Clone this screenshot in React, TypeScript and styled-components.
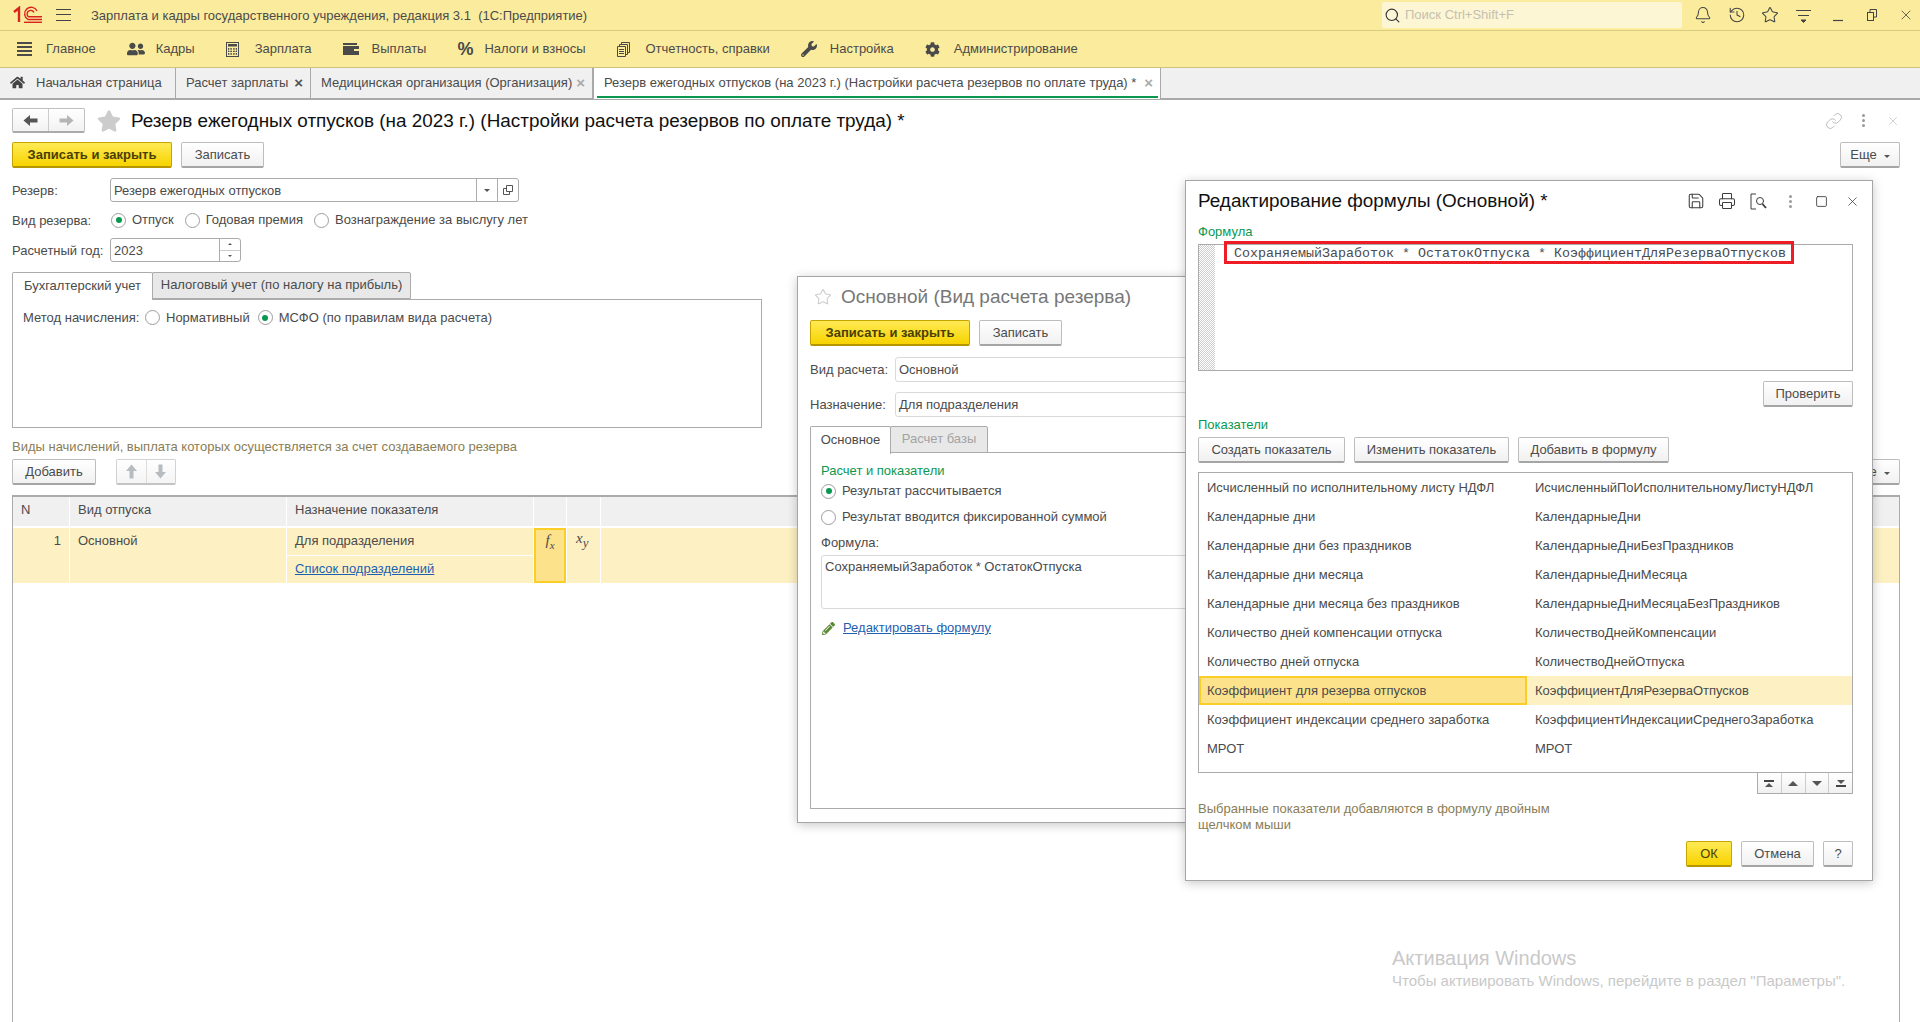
import React from 'react';
import styled, { createGlobalStyle } from 'styled-components';
import { Bell, History, Star, Search, Save, Printer, Square, X, Link as ChainIcon } from 'lucide-react';
import { FaHome, FaUserFriends, FaWrench, FaCog, FaStar, FaPencilAlt } from 'react-icons/fa';

const Global = createGlobalStyle`
  html, body { margin: 0; padding: 0; height: 100%; overflow: hidden; background: #fff; }
  body { font: 13px/16px "Liberation Sans", Arial, sans-serif; color: #4b4b4b; }
  * { box-sizing: border-box; }
`;

const Page = styled.div`
  position: relative; width: 1920px; height: 1022px; display: flex; flex-direction: column; overflow: hidden;
`;
const TitleBar = styled.header`
  height: 31px; flex: none; display: flex; align-items: center; background: #fbec9d;
  border-bottom: 1px solid #d8cb80; padding-left: 13px;
`;
const Logo = styled.svg`width: 30px; height: 18px; flex: none;`;
const Burger = styled.div`
  width: 15px; height: 12px; margin-left: 13px; flex: none;
  border-top: 1px solid #444; border-bottom: 1px solid #444; position: relative;
  &::after { content: ''; position: absolute; left: 0; right: 0; top: 4px; height: 1px; background: #444; }
`;
const AppName = styled.div`margin-left: 20px; padding-top: 1px; white-space: pre;`;
const SearchBox = styled.div`
  margin-left: auto; width: 300px; height: 26px; background: #fdf6d4; border-radius: 2px;
  display: flex; align-items: center; padding-left: 2px; color: #c4c0b0;
  & > svg { color: #333; margin-right: 4px; }
`;
const TopIcons = styled.div`
  display: flex; align-items: center; padding-left: 12px; color: #444; width: 238px; flex: none;
  & > * { flex: none; }
`;
const TopIcon = styled.span<{ $w: number }>`
  width: ${p => p.$w}px; display: flex; align-items: center;
`;
const MenuBar = styled.nav`
  height: 37px; flex: none; background: #fbec9d; border-bottom: 1px solid #cfc27c;
  display: flex; align-items: center; padding-left: 17px; gap: 31px;
`;
const MenuItem = styled.div`display: flex; align-items: center; white-space: nowrap;`;
const MenuIcon = styled.span<{ $w?: number }>`
  width: ${p => p.$w ?? 29}px; height: 18px; display: flex; align-items: center; flex: none; color: #4a4a4a;
`;
const Percent = styled.span`font-size: 18px; font-weight: bold; color: #4a4a4a; line-height: 18px;`;
const TabBar = styled.div`
  height: 32px; flex: none; background: #f0f0f0; border-bottom: 2px solid #a9a9a9; display: flex;
`;
const PageTab = styled.div<{ $w: number; $active?: boolean }>`
  width: ${p => p.$w}px; height: 31px; flex: none; position: relative; display: flex; align-items: center;
  padding: 0 7px 2px 10px; border-right: 1px solid #a9a9a9; white-space: nowrap;
  background: ${p => (p.$active ? '#fff' : 'transparent')};
  ${p => p.$active && `
    border-left: 1px solid #a9a9a9;
    &::after { content: ''; position: absolute; left: 3px; right: 2px; bottom: 1px; height: 2px; background: #0a9850; }
  `}
`;
const TabClose = styled.span<{ $muted?: boolean }>`
  margin-left: auto; font-size: 15px; font-weight: bold; color: ${p => (p.$muted ? '#aaa' : '#555')};
`;
const HomeIcon = styled.span`width: 26px; display: flex; color: #444; flex: none;`;

const Form = styled.main`
  flex: 1; min-height: 0; display: flex; flex-direction: column; padding: 8px 20px 0 12px;
`;
const HeadRow = styled.div`display: flex; align-items: center; height: 25px; flex: none;`;
const NavGroup = styled.div`
  width: 73px; height: 25px; flex: none; display: flex; border: 1px solid #c0c0c0; border-bottom: 2px solid #aaa; border-radius: 2px;
  background: linear-gradient(#fff, #f2f2f2);
`;
const NavCell = styled.span<{ $first?: boolean }>`
  flex: 1; display: flex; align-items: center; justify-content: center;
  ${p => p.$first && 'border-right: 1px solid #ccc;'}
`;
const BigStar = styled.span`margin-left: 12px; width: 34px; color: #ccc; display: flex; flex: none;`;
const MainTitle = styled.h1`
  margin: 0; font-size: 18.9px; line-height: 24px; font-weight: normal; color: #111; white-space: nowrap;
`;
const HeadTools = styled.div`
  margin-left: auto; display: flex; align-items: center; color: #bbb;
`;
const Toolbar = styled.div<{ $mt?: number }>`
  display: flex; align-items: flex-start; gap: 9px; flex: none; margin-top: ${p => p.$mt ?? 9}px; height: 26px;
`;
const Button = styled.button<{ $w: number; $primary?: boolean; $push?: boolean }>`
  width: ${p => p.$w}px; height: 26px; flex: none; padding: 1px 0 0; font: inherit; white-space: nowrap;
  display: flex; align-items: center; justify-content: center;
  border-radius: 2px; border: 1px solid ${p => (p.$primary ? '#c7a500' : '#bdbdbd')};
  border-bottom-width: 2px;
  border-bottom-color: ${p => (p.$primary ? '#b59600' : '#a5a5a5')};
  color: ${p => (p.$primary ? '#4a3f00' : '#4b4b4b')};
  background: ${p => (p.$primary ? 'linear-gradient(#ffea55, #f7d300)' : 'linear-gradient(#fff, #f1f1f1)')};
  ${p => p.$push && 'margin-left: auto;'}
`;
const Strong = styled.b`font-weight: bold;`;
const Caret = styled.i`
  display: inline-block; margin-left: 7px; width: 0; height: 0; margin-top: 2px;
  border-left: 3px solid transparent; border-right: 3px solid transparent; border-top: 3px solid #555;
`;
const FieldRow = styled.div<{ $mt: number; $h?: number }>`
  display: flex; align-items: center; flex: none; height: ${p => p.$h ?? 24}px; margin-top: ${p => p.$mt}px;
`;
const Label = styled.label<{ $w: number }>`width: ${p => p.$w}px; flex: none; white-space: nowrap; padding-top: 1px;`;
const Field = styled.div<{ $w: number; $soft?: boolean }>`
  width: ${p => p.$w}px; height: 100%; flex: none; display: flex; align-items: center; white-space: nowrap; padding-top: 0;
  border: 1px solid ${p => (p.$soft ? '#d9d9d9' : '#ababab')}; border-radius: 3px; background: #fff; padding-left: 3px;
`;
const FieldText = styled.span`flex: 1; padding-top: 1px;`;
const FieldBtn = styled.span<{ $w: number }>`
  width: ${p => p.$w}px; height: 100%; flex: none; border-left: 1px solid #ababab; display: flex; align-items: center; justify-content: center;
`;
const Spin = styled.span`
  width: 21px; height: 100%; flex: none; border-left: 1px solid #ababab; display: flex; flex-direction: column;
  & > span { flex: 1; display: flex; align-items: center; justify-content: center; }
  & > span + span { border-top: 1px solid #ccc; }
`;
const Tri = styled.i<{ $up?: boolean; $s?: number }>`
  display: block; width: 0; height: 0;
  border-left: ${p => p.$s ?? 2}px solid transparent; border-right: ${p => p.$s ?? 2}px solid transparent;
  ${p => (p.$up ? 'border-bottom' : 'border-top')}: ${p => p.$s ?? 2}px solid #555;
`;
const RadioItem = styled.span<{ $mr?: number }>`
  display: inline-flex; align-items: center; white-space: nowrap; margin-right: ${p => p.$mr ?? 11}px;
`;
const RadioDot = styled.span<{ $on?: boolean }>`
  width: 15px; height: 15px; border-radius: 50%; border: 1px solid #9d9d9d; background: #fff; flex: none; margin-right: 6px;
  display: flex; align-items: center; justify-content: center;
  &::after { content: ''; width: 6px; height: 6px; border-radius: 50%; background: ${p => (p.$on ? '#0a9850' : 'transparent')}; }
`;
const TabStrip = styled.div<{ $mt: number; $h: number }>`
  display: flex; flex: none; margin-top: ${p => p.$mt}px; height: ${p => p.$h}px; position: relative; z-index: 1;
`;
const SubTab = styled.div<{ $w: number; $active?: boolean; $muted?: boolean }>`
  width: ${p => p.$w}px; height: calc(100% + ${p => (p.$active ? 1 : 0)}px); display: flex; align-items: center; justify-content: center; white-space: nowrap;
  border: 1px solid #ababab; border-radius: 2px 2px 0 0; padding-bottom: 1px;
  ${p => (p.$active ? 'border-bottom: none; background: #fff;' : 'background: #e8e8e8; margin-left: -1px;')}
  ${p => p.$muted && 'color: #a3a3a3;'}
`;
const MainPanel = styled.section`
  width: 750px; height: 129px; flex: none; border: 1px solid #ababab; padding: 9px 10px;
  display: flex; align-items: center; align-self: flex-start; flex-wrap: wrap; align-content: flex-start;
`;
const Note = styled.div<{ $mt: number }>`
  color: #8a7d55; margin-top: ${p => p.$mt}px; flex: none; height: 15px;
`;
const ArrowGroup = styled.div`
  width: 60px; height: 26px; margin-left: 11px; flex: none; display: flex; border: 1px solid #d2d2d2; border-bottom: 2px solid #c4c4c4; border-radius: 2px;
  background: linear-gradient(#fff, #f4f4f4);
  & > span { flex: 1; display: flex; align-items: center; justify-content: center; }
  & > span + span { border-left: 1px solid #ddd; }
`;
const Table = styled.div`
  flex: 1; min-height: 0; margin-top: 10px; border: 1px solid #ababab; border-width: 2px 1px 0 1px;
  display: grid; grid-template-columns: 56px 216px 246px 32px 33px 1fr; grid-template-rows: 29px 55px 1fr;
  column-gap: 1px; row-gap: 2px; background: #fff;
`;
const Head = styled.div`
  background: #f0f0f0; display: flex; align-items: center; padding-left: 8px; padding-bottom: 3px; white-space: nowrap;
`;
const RowCell = styled.div<{ $right?: boolean }>`
  background: #fdf1c3; padding: 5px 8px; ${p => p.$right && 'text-align: right;'}
`;
const SplitCell = styled.div`display: flex; flex-direction: column; gap: 1px; background: #fff;`;
const SplitPart = styled.div`flex: 1; background: #fdf1c3; display: flex; align-items: center; padding-left: 8px; padding-bottom: 2px;`;
const Link = styled.a`color: #1f5fb0; text-decoration: underline; white-space: nowrap;`;
const FxCell = styled.div`
  background: #fde28c; border: 2px solid #fbce27; text-align: center; font: italic 15px/16px "Liberation Serif", serif; padding-top: 2px;
  & sub { font-size: 11px; line-height: 0; }
`;
const XyCell = styled.div`
  background: #fdf1c3; font: italic 15px/16px "Liberation Serif", serif; padding: 2px 0 0 9px;
  & sub { font-size: 13px; line-height: 0; }
`;

const Win = styled.section<{ $l: number; $t: number; $w: number; $h: number }>`
  position: absolute; left: ${p => p.$l}px; top: ${p => p.$t}px; width: ${p => p.$w}px; height: ${p => p.$h}px;
  background: #fff; border: 1px solid #a6a6a6; box-shadow: 0 2px 10px rgba(0,0,0,.22);
  padding-left: 12px; display: flex; flex-direction: column;
`;
const WinHead = styled.div<{ $mt: number; $h?: number }>`
  display: flex; align-items: center; flex: none; height: ${p => p.$h ?? 26}px; margin-top: ${p => p.$mt}px;
`;
const WinTitle = styled.div<{ $muted?: boolean }>`
  font-size: ${p => (p.$muted ? 19 : 18.9)}px; line-height: 24px; white-space: nowrap; color: ${p => (p.$muted ? '#777' : '#111')};
`;
const SoftStar = styled.span`width: 27px; margin-left: 4px; color: #ccc; display: flex; flex: none;`;
const Panel = styled.section`
  flex: none; height: 357px; width: 640px; border: 1px solid #ababab; padding: 10px 0 0 10px; margin-top: -1px;
`;
const Section = styled.div<{ $mt?: number }>`
  color: #0a9850; height: 16px; flex: none; white-space: nowrap; margin-top: ${p => p.$mt ?? 0}px;
`;
const PlainLabel = styled.div<{ $mt: number }>`margin-top: ${p => p.$mt}px; height: 16px;`;
const FormulaBox = styled.div`
  margin-top: 4px; width: 560px; height: 54px; border: 1px solid #d9d9d9; border-radius: 3px; padding: 3px;
`;
const EditLine = styled.div`
  margin-top: 11px; height: 16px; display: flex; align-items: center; color: #5d8a35;
  & > svg { margin: 0 8px 0 1px; }
`;
const Tools = styled.div`
  margin-left: auto; display: flex; align-items: center; color: #3c3c3c; flex: none;
`;
const ToolSlot = styled.span<{ $w: number }>`width: ${p => p.$w}px; display: flex; flex: none; align-items: center;`;
const Dots = styled.span`
  display: flex; flex-direction: column; gap: 2px; width: 3px;
  & > i { width: 3px; height: 3px; border-radius: 50%; background: #999; display: block; }
`;
const Editor = styled.div`
  position: relative; margin-top: 4px; width: 655px; height: 127px; flex: none; border: 1px solid #ababab; display: flex;
`;
const Gutter = styled.div`
  width: 16px; flex: none; background: repeating-conic-gradient(#cfcfcf 0% 25%, #fff 0% 50%) 0 0 / 2px 2px;
`;
const Code = styled.div`
  padding: 1px 0 0 19px; font: 13.33px/16px "Liberation Mono", "Courier New", monospace; white-space: pre; color: #4b4b4b;
`;
const Mark = styled.div`
  position: absolute; left: 25px; top: -4px; width: 570px; height: 23px; border: 3px solid #ee1c25;
`;
const RightRow = styled.div<{ $mt: number }>`
  display: flex; justify-content: flex-end; gap: 9px; width: 655px; margin-top: ${p => p.$mt}px; flex: none;
`;
const LeftRow = styled.div<{ $mt: number }>`
  display: flex; gap: 9px; margin-top: ${p => p.$mt}px; flex: none;
`;
const List = styled.div`
  margin-top: 9px; width: 655px; height: 301px; flex: none; border: 1px solid #ababab; overflow: hidden;
`;
const ListRow = styled.div`display: grid; grid-template-columns: 328px 1fr; height: 29px;`;
const ListCell = styled.div<{ $state?: 'focus' | 'row' }>`
  padding: 0 0 0 8px; display: flex; align-items: center; white-space: nowrap;
  ${p => p.$state === 'focus' && 'background: #fde28c; border: 2px solid #fbce27; padding-left: 6px;'}
  ${p => p.$state === 'row' && 'background: #fdf1c3;'}
`;
const Scroller = styled.div`
  width: 96px; height: 22px; flex: none; align-self: flex-start; margin-left: 559px; margin-top: -1px;
  border: 1px solid #ababab; display: flex;
  background: linear-gradient(#fff, #f0f0f0);
  & > span { flex: 1; display: flex; flex-direction: column; gap: 1px; align-items: center; justify-content: center; }
  & > span + span { border-left: 1px solid #ccc; }
`;
const Bar = styled.i`display: block; width: 10px; height: 2px; background: #444;`;
const Hint = styled.div`
  color: #8a7d55; width: 360px; margin-top: 7px; flex: none; height: 32px;
`;
const Watermark = styled.div`
  position: absolute; left: 1392px; top: 946px; color: #c9c9c9; pointer-events: none; white-space: nowrap;
`;
const WmBig = styled.div`font-size: 20px; line-height: 24px;`;
const WmSmall = styled.div`font-size: 15px; line-height: 20px; margin-top: 1px;`;
const ArrowSvg = styled.svg<{ $rot: number }>`width: 15px; height: 15px; transform: rotate(${p => p.$rot}deg);`;

const rows: [string, string][] = [
  ['Исчисленный по исполнительному листу НДФЛ', 'ИсчисленныйПоИсполнительномуЛистуНДФЛ'],
  ['Календарные дни', 'КалендарныеДни'],
  ['Календарные дни без праздников', 'КалендарныеДниБезПраздников'],
  ['Календарные дни месяца', 'КалендарныеДниМесяца'],
  ['Календарные дни месяца без праздников', 'КалендарныеДниМесяцаБезПраздников'],
  ['Количество дней компенсации отпуска', 'КоличествоДнейКомпенсации'],
  ['Количество дней отпуска', 'КоличествоДнейОтпуска'],
  ['Коэффициент для резерва отпусков', 'КоэффициентДляРезерваОтпусков'],
  ['Коэффициент индексации среднего заработка', 'КоэффициентИндексацииСреднегоЗаработка'],
  ['МРОТ', 'МРОТ'],
  ['Норма дней', 'НормаДней'],
];

const Arrow = ({ dir, color }: { dir: 'l' | 'r' | 'u' | 'd'; color: string }) => (
  <ArrowSvg viewBox="0 0 15 15" $rot={{ l: 0, r: 180, u: 90, d: 270 }[dir]}>
    <path d="M0.5 7.5 L7 2 V5.5 H14.5 V9.5 H7 V13 Z" fill={color} />
  </ArrowSvg>
);

const OneC = () => (
  <Logo viewBox="0 0 30 18" fill="none" stroke="#d8231f">
    <path d="M1 6 L6 2 V16" strokeWidth="2.4" />
    <path d="M24 5 A6.5 6.5 0 1 0 15 13.5 H29" strokeWidth="1.4" />
    <path d="M21 6.5 A3.6 3.6 0 1 0 15.5 10.8 H29" strokeWidth="1.4" />
    <path d="M11 16.3 H29" strokeWidth="1.4" />
  </Logo>
);

const App = () => (
  <Page>
    <Global />
    <TitleBar>
      <OneC />
      <Burger />
      <AppName>Зарплата и кадры государственного учреждения, редакция 3.1  (1С:Предприятие)</AppName>
      <SearchBox>
        <Search size={17} strokeWidth={1.6} />
        Поиск Ctrl+Shift+F
      </SearchBox>
      <TopIcons>
        <TopIcon $w={34}><Bell size={18} strokeWidth={1.4} /></TopIcon>
        <TopIcon $w={33}><History size={18} strokeWidth={1.4} /></TopIcon>
        <TopIcon $w={35}><Star size={18} strokeWidth={1.4} /></TopIcon>
        <TopIcon $w={37}>
          <svg width="15" height="15" viewBox="0 0 15 15" stroke="#444" fill="none">
            <path d="M0 2.5 H15 M2 7.5 H13" />
            <path d="M5 12 H10 L7.5 14.5 Z" fill="#444" />
          </svg>
        </TopIcon>
        <TopIcon $w={34}>
          <svg width="10" height="14" viewBox="0 0 10 14" stroke="#444" fill="none"><path d="M0 12.5 H10" strokeWidth="1.2" /></svg>
        </TopIcon>
        <TopIcon $w={31}>
          <svg width="10" height="12" viewBox="0 0 10 12" stroke="#444" fill="none">
            <rect x="0.5" y="3.5" width="6" height="8" /><path d="M3 3 V0.5 H9.5 V8 H7" />
          </svg>
        </TopIcon>
        <X size={16} strokeWidth={1.2} />
      </TopIcons>
    </TitleBar>

    <MenuBar>
      <MenuItem>
        <MenuIcon>
          <svg width="15" height="14" viewBox="0 0 15 14" fill="#4a4a4a">
            <rect y="0" width="15" height="2" /><rect y="4" width="15" height="2" /><rect y="8" width="15" height="2" /><rect y="12" width="15" height="2" />
          </svg>
        </MenuIcon>Главное
      </MenuItem>
      <MenuItem><MenuIcon><FaUserFriends size={18} /></MenuIcon>Кадры</MenuItem>
      <MenuItem>
        <MenuIcon>
          <svg width="13" height="15" viewBox="0 0 13 15" fill="none" stroke="#4a4a4a">
            <rect x="0.5" y="0.5" width="12" height="14" />
            <rect x="2" y="2" width="9" height="2.5" fill="#4a4a4a" stroke="none" />
            <path d="M2.5 6 V13 M5 6 V13 M8 6 V13 M10.5 6 V13 M2 7 H11 M2 9.5 H11 M2 12 H11" strokeDasharray="1.5 1" />
          </svg>
        </MenuIcon>Зарплата
      </MenuItem>
      <MenuItem>
        <MenuIcon>
          <svg width="16" height="12" viewBox="0 0 16 12" fill="#4a4a4a">
            <path d="M0 0 H14 V2 H0 Z M0 3 H16 V12 H0 Z" />
            <rect x="11" y="6" width="5" height="2" fill="#fbec9d" />
          </svg>
        </MenuIcon>Выплаты
      </MenuItem>
      <MenuItem><MenuIcon $w={27}><Percent>%</Percent></MenuIcon>Налоги и взносы</MenuItem>
      <MenuItem>
        <MenuIcon>
          <svg width="13" height="15" viewBox="0 0 13 15" fill="#fbec9d" stroke="#4a4a4a">
            <path d="M4.5 0.5 H12.5 V10.5 H4.5 Z" /><path d="M2.5 2.5 H10.5 V12.5 H2.5 Z" /><path d="M0.5 4.5 H8.5 V14.5 H0.5 Z" />
            <path d="M2 7.5 H7 M2 9.5 H7 M2 11.5 H7" />
          </svg>
        </MenuIcon>Отчетность, справки
      </MenuItem>
      <MenuItem>
        <MenuIcon><FaWrench size={16} /></MenuIcon>Настройка
      </MenuItem>
      <MenuItem><MenuIcon><FaCog size={15} /></MenuIcon>Администрирование</MenuItem>
    </MenuBar>

    <TabBar>
      <PageTab $w={176}><HomeIcon><FaHome size={15} /></HomeIcon>Начальная страница</PageTab>
      <PageTab $w={135}>Расчет зарплаты<TabClose>×</TabClose></PageTab>
      <PageTab $w={282}>Медицинская организация (Организация)<TabClose $muted>×</TabClose></PageTab>
      <PageTab $w={568} $active>Резерв ежегодных отпусков (на 2023 г.) (Настройки расчета резервов по оплате труда) *<TabClose $muted>×</TabClose></PageTab>
    </TabBar>

    <Form>
      <HeadRow>
        <NavGroup>
          <NavCell $first><Arrow dir="l" color="#555" /></NavCell>
          <NavCell><Arrow dir="r" color="#b5b5b5" /></NavCell>
        </NavGroup>
        <BigStar><FaStar size={24} /></BigStar>
        <MainTitle>Резерв ежегодных отпусков (на 2023 г.) (Настройки расчета резервов по оплате труда) *</MainTitle>
        <HeadTools>
          <ToolSlot $w={37}><ChainIcon size={18} strokeWidth={1.3} /></ToolSlot>
          <ToolSlot $w={24}><Dots><i /><i /><i /></Dots></ToolSlot>
          <X size={14} strokeWidth={1.2} />
        </HeadTools>
      </HeadRow>
      <Toolbar>
        <Button $w={160} $primary><Strong>Записать и закрыть</Strong></Button>
        <Button $w={83}>Записать</Button>
        <Button $w={60} $push>Еще<Caret /></Button>
      </Toolbar>
      <FieldRow $mt={10}>
        <Label $w={98}>Резерв:</Label>
        <Field $w={409}>
          <FieldText>Резерв ежегодных отпусков</FieldText>
          <FieldBtn $w={21}><Tri $s={3} /></FieldBtn>
          <FieldBtn $w={21}>
            <svg width="10" height="10" viewBox="0 0 10 10" fill="none" stroke="#555"><path d="M3.5 0.5 H9.5 V6.5 H3.5 Z M3.5 3.5 H0.5 V9.5 H6.5 V6.5" /></svg>
          </FieldBtn>
        </Field>
      </FieldRow>
      <FieldRow $mt={6}>
        <Label $w={99}>Вид резерва:</Label>
        <RadioItem><RadioDot $on />Отпуск</RadioItem>
        <RadioItem><RadioDot />Годовая премия</RadioItem>
        <RadioItem><RadioDot />Вознаграждение за выслугу лет</RadioItem>
      </FieldRow>
      <FieldRow $mt={6}>
        <Label $w={98}>Расчетный год:</Label>
        <Field $w={131}>
          <FieldText>2023</FieldText>
          <Spin><span><Tri $up /></span><span><Tri /></span></Spin>
        </Field>
      </FieldRow>
      <TabStrip $mt={10} $h={27}>
        <SubTab $w={141} $active>Бухгалтерский учет</SubTab>
        <SubTab $w={259}>Налоговый учет (по налогу на прибыль)</SubTab>
      </TabStrip>
      <MainPanel>
        <Label $w={122}>Метод начисления:</Label>
        <RadioItem $mr={8}><RadioDot />Нормативный</RadioItem>
        <RadioItem><RadioDot $on />МСФО (по правилам вида расчета)</RadioItem>
      </MainPanel>
      <Note $mt={11}>Виды начислений, выплата которых осуществляется за счет создаваемого резерва</Note>
      <Toolbar $mt={5}>
        <Button $w={84}>Добавить</Button>
        <ArrowGroup>
          <span><Arrow dir="u" color="#b7bcc0" /></span>
          <span><Arrow dir="d" color="#b7bcc0" /></span>
        </ArrowGroup>
        <Button $w={60} $push>Еще<Caret /></Button>
      </Toolbar>
      <Table>
        <Head>N</Head>
        <Head>Вид отпуска</Head>
        <Head>Назначение показателя</Head>
        <Head />
        <Head />
        <Head />
        <RowCell $right>1</RowCell>
        <RowCell>Основной</RowCell>
        <SplitCell>
          <SplitPart>Для подразделения</SplitPart>
          <SplitPart><Link>Список подразделений</Link></SplitPart>
        </SplitCell>
        <FxCell>f<sub>x</sub></FxCell>
        <XyCell>x<sub>y</sub></XyCell>
        <RowCell />
      </Table>
    </Form>

    <Win $l={797} $t={276} $w={500} $h={547}>
      <WinHead $mt={7}>
        <SoftStar><Star size={18} strokeWidth={1.4} /></SoftStar>
        <WinTitle $muted>Основной (Вид расчета резерва)</WinTitle>
      </WinHead>
      <Toolbar $mt={10}>
        <Button $w={160} $primary><Strong>Записать и закрыть</Strong></Button>
        <Button $w={83}>Записать</Button>
      </Toolbar>
      <FieldRow $mt={11} $h={25}>
        <Label $w={85}>Вид расчета:</Label>
        <Field $w={400} $soft>Основной</Field>
      </FieldRow>
      <FieldRow $mt={10} $h={25}>
        <Label $w={85}>Назначение:</Label>
        <Field $w={400} $soft>Для подразделения</Field>
      </FieldRow>
      <TabStrip $mt={9} $h={27}>
        <SubTab $w={81} $active>Основное</SubTab>
        <SubTab $w={98} $muted>Расчет базы</SubTab>
      </TabStrip>
      <Panel>
        <Section>Расчет и показатели</Section>
        <FieldRow $mt={0} $h={24}><RadioItem><RadioDot $on />Результат рассчитывается</RadioItem></FieldRow>
        <FieldRow $mt={2} $h={24}><RadioItem><RadioDot />Результат вводится фиксированной суммой</RadioItem></FieldRow>
        <PlainLabel $mt={6}>Формула:</PlainLabel>
        <FormulaBox>СохраняемыйЗаработок * ОстатокОтпуска</FormulaBox>
        <EditLine><FaPencilAlt size={13} /><Link>Редактировать формулу</Link></EditLine>
      </Panel>
    </Win>

    <Win $l={1185} $t={180} $w={688} $h={701}>
      <WinHead $mt={7}>
        <WinTitle>Редактирование формулы (Основной) *</WinTitle>
        <Tools>
          <ToolSlot $w={31}><Save size={18} strokeWidth={1.4} /></ToolSlot>
          <ToolSlot $w={32}><Printer size={18} strokeWidth={1.4} /></ToolSlot>
          <ToolSlot $w={39}>
            <svg width="17" height="17" viewBox="0 0 17 17" fill="none" stroke="#3c3c3c">
              <path d="M6 1 H1 V16 H6" /><circle cx="10" cy="8" r="3.5" /><path d="M12.5 11 L16 15" strokeWidth="1.8" />
            </svg>
          </ToolSlot>
          <ToolSlot $w={26}><Dots><i /><i /><i /></Dots></ToolSlot>
          <ToolSlot $w={30}><Square size={13} strokeWidth={1.6} /></ToolSlot>
          <ToolSlot $w={27}><X size={15} strokeWidth={1.2} /></ToolSlot>
        </Tools>
      </WinHead>
      <Section $mt={10}>Формула</Section>
      <Editor>
        <Gutter />
        <Code>СохраняемыйЗаработок * ОстатокОтпуска * КоэффициентДляРезерваОтпусков</Code>
        <Mark />
      </Editor>
      <RightRow $mt={10}><Button $w={90}>Проверить</Button></RightRow>
      <Section $mt={10}>Показатели</Section>
      <LeftRow $mt={4}>
        <Button $w={147}>Создать показатель</Button>
        <Button $w={155}>Изменить показатель</Button>
        <Button $w={151}>Добавить в формулу</Button>
      </LeftRow>
      <List>
        {rows.map(([a, b], i) => (
          <ListRow key={a}>
            <ListCell $state={i === 7 ? 'focus' : undefined}>{a}</ListCell>
            <ListCell $state={i === 7 ? 'row' : undefined}>{b}</ListCell>
          </ListRow>
        ))}
      </List>
      <Scroller>
        <span><Bar /><Tri $up $s={4} /></span>
        <span><Tri $up $s={5} /></span>
        <span><Tri $s={5} /></span>
        <span><Tri $s={4} /><Bar /></span>
      </Scroller>
      <Hint>Выбранные показатели добавляются в формулу двойным щелчком мыши</Hint>
      <RightRow $mt={8}>
        <Button $w={46} $primary>ОК</Button>
        <Button $w={73}>Отмена</Button>
        <Button $w={30}>?</Button>
      </RightRow>
    </Win>

    <Watermark>
      <WmBig>Активация Windows</WmBig>
      <WmSmall>Чтобы активировать Windows, перейдите в раздел "Параметры".</WmSmall>
    </Watermark>
  </Page>
);

export default App;
